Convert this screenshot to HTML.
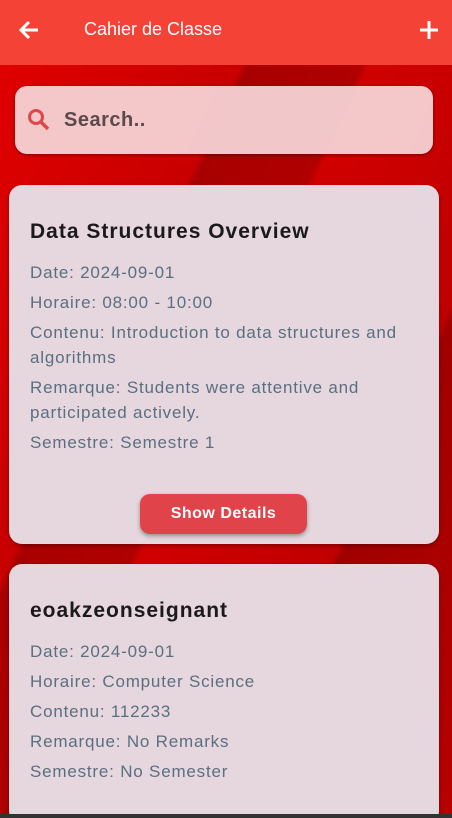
<!DOCTYPE html>
<html><head><meta charset="utf-8"><style>
*{margin:0;padding:0;box-sizing:border-box}
html,body{width:452px;height:818px;overflow:hidden}
body{font-family:"Liberation Sans",sans-serif;position:relative;background:#d40000}
.bg{position:absolute;left:0;top:65px;width:452px;height:753px;background:linear-gradient(115deg,#e00000 0%,#c80000 30%,#a80000 31%,#b00000 45%,#d00000 46%,#c00000 70%,#a00000 71%,#b80000 100%)}
.hdr{position:absolute;left:0;top:0;width:452px;height:65px;background:#f44336;color:#fff}
.hdr .t{position:absolute;left:84px;top:19px;font-size:18px}
.search{position:absolute;left:15px;top:86px;width:418px;height:68px;border-radius:12px;background:rgba(245,210,212,.95);box-shadow:0 1px 3px rgba(0,0,0,.4)}
.search span{position:absolute;left:49px;top:23px;font-size:20px;font-weight:bold;color:#5a4a4c;letter-spacing:.5px}
.card{position:absolute;left:9px;width:430px;border-radius:13px;background:#e6d6de;box-shadow:0 2px 4px rgba(0,0,0,.3);overflow:hidden}
.card h2{position:absolute;left:21px;font-size:21px;color:#1a1a1a;letter-spacing:1px;white-space:nowrap}
.card p{position:absolute;left:21px;font-size:17px;color:#5a6f80;line-height:25px;width:375px;letter-spacing:.8px}
.btn{position:absolute;left:131px;top:309px;width:167px;height:40px;border-radius:10px;background:#e0444a;color:#fff;font-weight:bold;font-size:16px;text-align:center;line-height:40px;box-shadow:0 2px 4px rgba(0,0,0,.35);letter-spacing:.5px}
.bar{position:absolute;left:0;top:814px;width:452px;height:4px;background:#333}
</style></head><body>
<div class="bg"></div>
<div class="hdr">
<svg style="position:absolute;left:18px;top:19px" width="22" height="22" viewBox="0 0 22 22"><path d="M20 11H3M11 3L3 11l8 8" stroke="#fff" stroke-width="3" fill="none"/></svg>
<div class="t">Cahier de Classe</div>
<svg style="position:absolute;left:419px;top:20px" width="20" height="20" viewBox="0 0 20 20"><path d="M10 1v18M1 10h18" stroke="#fff" stroke-width="3"/></svg>
</div>
<div class="search">
<svg style="position:absolute;left:12px;top:22px" width="24" height="24" viewBox="0 0 24 24"><circle cx="9" cy="9" r="6.5" stroke="#e04848" stroke-width="3" fill="none"/><path d="M14 14l7 7" stroke="#e04848" stroke-width="3.5"/></svg>
<span>Search..</span>
</div>
<div class="card" style="top:185px;height:359px">
<h2 style="top:35px">Data Structures Overview</h2>
<p style="top:75px">Date: 2024-09-01</p>
<p style="top:105px">Horaire: 08:00 - 10:00</p>
<p style="top:135px">Contenu: Introduction to data structures and algorithms</p>
<p style="top:190px">Remarque: Students were attentive and participated actively.</p>
<p style="top:245px">Semestre: Semestre 1</p>
<div class="btn">Show Details</div>
</div>
<div class="card" style="top:564px;height:260px">
<h2 style="top:35px">eoakzeonseignant</h2>
<p style="top:75px">Date: 2024-09-01</p>
<p style="top:105px">Horaire: Computer Science</p>
<p style="top:135px">Contenu: 112233</p>
<p style="top:165px">Remarque: No Remarks</p>
<p style="top:195px">Semestre: No Semester</p>
</div>
<div class="bar"></div>
</body></html>
